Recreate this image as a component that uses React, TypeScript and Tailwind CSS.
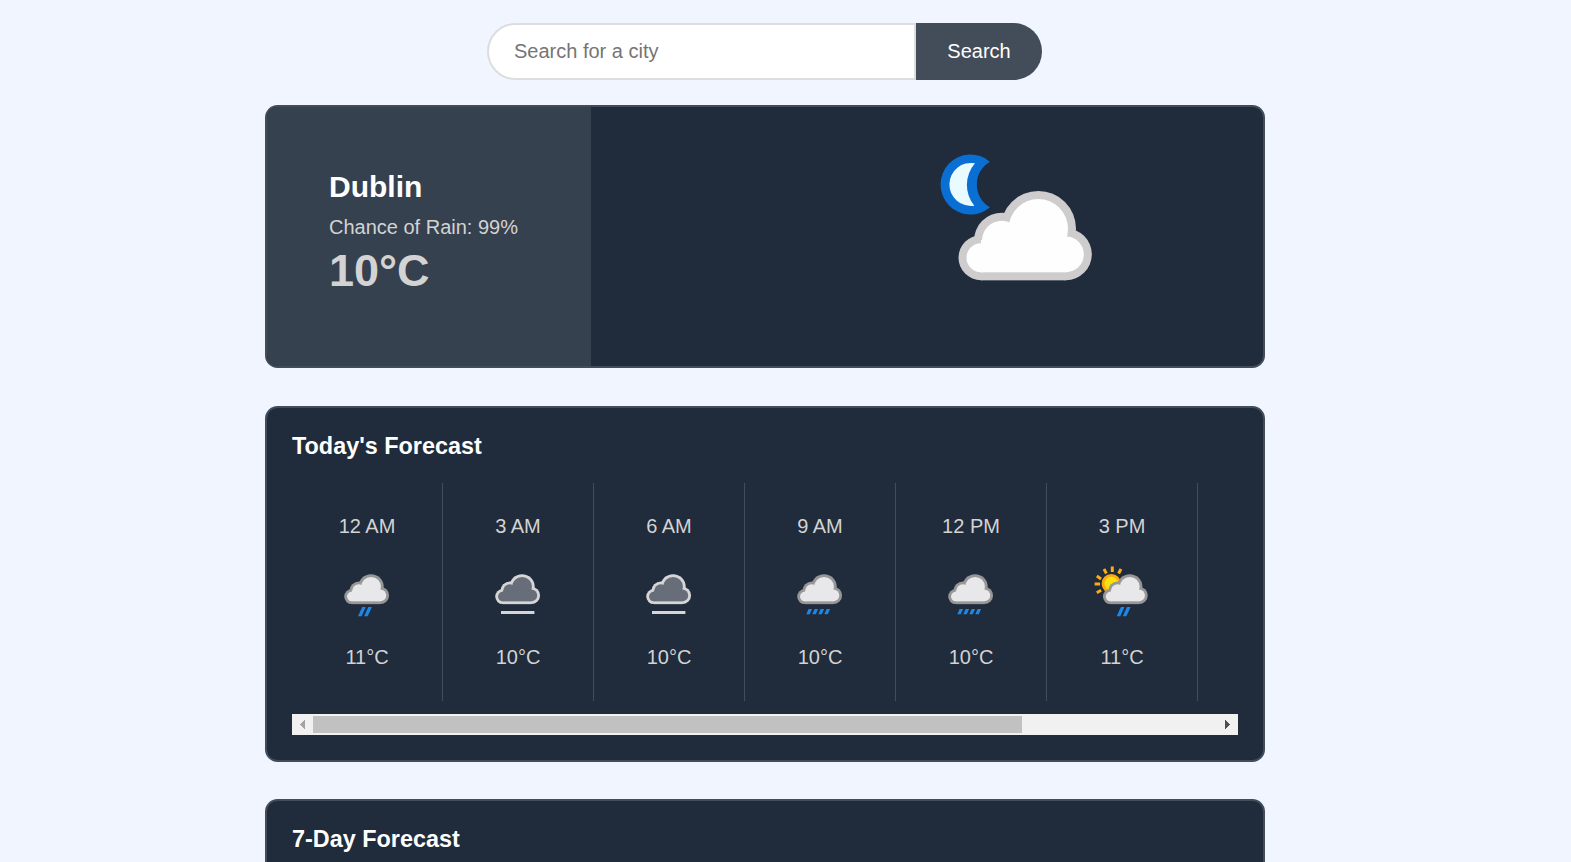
import type { ReactNode } from "react";

type Kind = "drizzle" | "overcast" | "rain" | "sunRain";

function Blob({ inset, color }: { inset: number; color: string }) {
  return (
    <g fill={color}>
      <circle cx="183" cy="353" r={67.5 - inset} />
      <circle cx="246" cy="302" r={84 - inset} />
      <circle cx="355" cy="266" r={113 - inset} />
      <circle cx="438" cy="343" r={77.5 - inset} />
      <rect x="183" y="300" width="255" height={121 - inset} />
    </g>
  );
}

function Cloud({ fill, stroke, edge = 24 }: { fill: string; stroke: string; edge?: number }) {
  return (
    <g>
      <Blob inset={0} color={stroke} />
      <Blob inset={edge} color={fill} />
    </g>
  );
}

function WeatherIcon({ kind }: { kind: Kind }) {
  const overcast = kind === "overcast";
  return (
    <svg viewBox="0 0 60 60" className="size-[60px]">
      {kind === "sunRain" && (
        <g>
          <circle cx="19.300" cy="18.700" r="8.300" fill="#fbe00a" stroke="#fba90f" strokeWidth="2.800" />
          <path
            d="M20.300 1.500V7M12 4.100l2.400 4.300M29 4.100l-2.400 4.300M4.800 11.100l4.300 2.900M2.600 19h5.400M4.800 27.800l4.300-2.600"
            stroke="#fdab0d"
            strokeWidth="3"
          />
        </g>
      )}
      <g transform={kind === "sunRain" ? "translate(3.700 0)" : undefined}>
        <g transform="translate(-5.700 -8) scale(.112)">
          <Cloud
            fill={overcast ? "#676d79" : "#e8e8ea"}
            stroke={overcast ? "#d6d6d6" : "#979797"}
            edge={25}
          />
        </g>
        {overcast ? (
          <path d="M13 46h33.400v3H13z" fill="#d6d6d6" />
        ) : kind === "rain" ? (
          <path
            d="M16.300 49.200l2.300-5.100h3.500l-2.300 5.100zM22.300 49.200l2.300-5.100h3.500l-2.300 5.100zM28.300 49.200l2.300-5.100h3.500l-2.300 5.100zM34.300 49.200l2.300-5.100h3.500l-2.300 5.100z"
            fill="#1d86e6"
          />
        ) : (
          <path
            d="M21 51.200l4.200-9.200h3.600l-4.200 9.200zM27.100 51.200l4.200-9.200h3.600l-4.200 9.200z"
            fill="#1d86e6"
          />
        )}
      </g>
    </svg>
  );
}

function NightCloud() {
  return (
    <svg viewBox="0 0 570 465" className="h-[155px] w-[190px] blur-[0.7px]">
      <path d="M210 65A90 90 0 1 0 210 202A79 79 0 0 1 210 65Z" fill="#0a6fd2" />
      <path d="M165 70A64.500 64.500 0 1 0 163 197A98 98 0 0 1 165 70Z" fill="#e9fbff" />
      <Cloud fill="#fefefe" stroke="#cecccc" />
    </svg>
  );
}

function Card({ className, children }: { className: string; children?: ReactNode }) {
  return (
    <section
      className={`w-[1000px] shrink-0 overflow-hidden rounded-[12.5px] border-2 border-[#434d5a] bg-[#202b3b] ${className}`}
    >
      {children}
    </section>
  );
}

const HOURS: { time: string; kind: Kind; temp: string }[] = [
  { time: "12 AM", kind: "drizzle", temp: "11°C" },
  { time: "3 AM", kind: "overcast", temp: "10°C" },
  { time: "6 AM", kind: "overcast", temp: "10°C" },
  { time: "9 AM", kind: "rain", temp: "10°C" },
  { time: "12 PM", kind: "rain", temp: "10°C" },
  { time: "3 PM", kind: "sunRain", temp: "11°C" },
];

function Scrollbar() {
  return (
    <div className="mt-[13px] flex h-[21px] items-center bg-[#f1f1f1]">
      <div className="flex w-[21px] justify-center">
        <svg viewBox="0 0 5 9" className="h-[9px] w-[5px]" shapeRendering="crispEdges">
          <path d="M5 0v9L0 4.500z" fill="#a3a3a3" />
        </svg>
      </div>
      <div className="h-[17px] w-[709px] bg-[#c1c1c1]" />
      <div className="ml-auto flex w-[21px] justify-center">
        <svg viewBox="0 0 5 9" className="h-[9px] w-[5px]" shapeRendering="crispEdges">
          <path d="M0 0v9l5-4.500z" fill="#505050" />
        </svg>
      </div>
    </div>
  );
}

export default function App() {
  return (
    <div className="flex h-[862px] w-full flex-col items-center overflow-hidden bg-[#f0f5ff] pt-[23px] pr-[41px] font-['Liberation_Sans',Arial,sans-serif] text-xl text-[#d3d3d3]">
      <form className="mr-px flex h-[57px] w-[555px] shrink-0" onSubmit={(e) => e.preventDefault()}>
        <input
          type="text"
          placeholder="Search for a city"
          className="w-[429px] rounded-l-full border-2 border-[#dddddd] bg-white pb-[2px] pl-[25px] text-[#333] outline-none placeholder:text-[#757575]"
        />
        <button className="w-[126px] rounded-r-full bg-[#434d5a] pb-[2px] text-white">Search</button>
      </form>

      <Card className="mt-[25px] flex h-[263px]">
        <div className="flex w-[324px] flex-col bg-[#36414f] pt-[62px] pl-[62px]">
          <h1 className="text-[30px] leading-[36px] font-bold text-white">Dublin</h1>
          <p className="mt-[10px] leading-6">Chance of Rain: 99%</p>
          <p className="mt-[7px] text-[45px] leading-[50px] font-bold">10°C</p>
        </div>
        <div className="flex pt-[33px] pl-[329px]">
          <NightCloud />
        </div>
      </Card>

      <Card className="mt-[38px] h-[356px] px-[25px] pt-[24px]">
        <h2 className="text-[23.400px] leading-[28px] font-bold text-white">Today's Forecast</h2>
        <div className="mt-[23px] flex h-[218px]">
          {HOURS.map((h) => (
            <div
              key={h.time}
              className="flex w-[151px] flex-col items-center border-r border-[#434d5a] pt-[31px]"
            >
              <span className="leading-6">{h.time}</span>
              <div className="mt-[27px]">
                <WeatherIcon kind={h.kind} />
              </div>
              <span className="mt-[20px] leading-6">{h.temp}</span>
            </div>
          ))}
        </div>
        <Scrollbar />
      </Card>

      <Card className="mt-[37px] h-[400px] px-[25px] pt-[24px]">
        <h2 className="text-[23.400px] leading-[28px] font-bold text-white">7-Day Forecast</h2>
      </Card>
    </div>
  );
}
